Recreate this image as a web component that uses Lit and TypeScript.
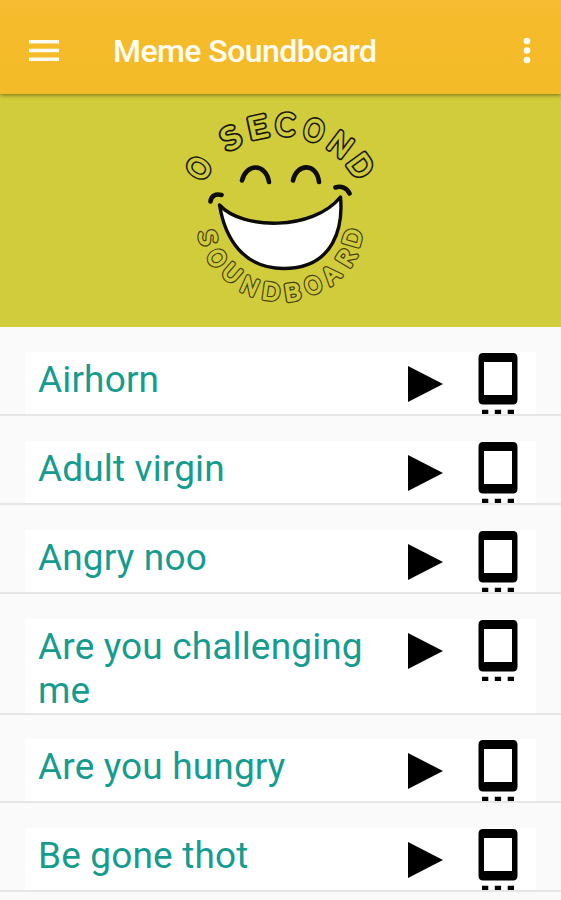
import { LitElement, html, css, svg } from "lit";
import { customElement, property } from "lit/decorators.js";

type Glyph = [letter: string, x: number, y: number, angle: number, stretch: number];

const TOP: Glyph[] = [
  ["O", 198.5, 168, -57, 0.84],
  ["S", 230.5, 137.5, -28, 1.15],
  ["E", 257.5, 127, -12, 1.15],
  ["C", 285, 124.3, 3, 0.95],
  ["O", 314, 130, 17, 0.84],
  ["N", 340.5, 144.5, 37, 0.95],
  ["D", 360.5, 165.5, 54, 0.95],
];

const BOTTOM: Glyph[] = [
  ["S", 208, 237.5, 75, 1.15],
  ["O", 217, 258, 58, 0.9],
  ["U", 232, 273, 41, 1],
  ["N", 250, 286, 24, 0.95],
  ["D", 271, 291.5, 8, 1],
  ["B", 292.5, 292, -9, 1.1],
  ["O", 313, 285, -25.5, 0.9],
  ["A", 331, 274.5, -42, 1],
  ["R", 346, 258, -59, 1.1],
  ["D", 352.5, 238, -74, 1],
];

@customElement("smile-banner")
class SmileBanner extends LitElement {
  static styles = css`
    :host { display: block; height: 232px; background: #d1cc3b; }
    svg { display: block; }
    text { font-family: Lato, "Liberation Sans", sans-serif; font-weight: 300; text-anchor: middle; stroke-linejoin: round; }
    .top { font-size: 29px; }
    .bottom { font-size: 22.5px; }
    .top .outer { stroke: #17160a; fill: #17160a; stroke-width: 5.8; }
    .top .inner { stroke: #d1cc3b; fill: #d1cc3b; stroke-width: 2.5; }
    .bottom .outer { stroke: #453f10; fill: #453f10; stroke-width: 4.8; }
    .bottom .inner { stroke: #d1cc3b; fill: #d1cc3b; stroke-width: 2.4; }
    .line { fill: none; stroke: #0d0c08; stroke-width: 4.6; stroke-linecap: round; }
    .mouth { fill: #fff; stroke: #0b0b08; stroke-width: 3.4; stroke-linejoin: round; }
  `;

  private arc(glyphs: Glyph[], drop: number) {
    return glyphs.map(
      ([c, x, y, a, s]) => svg`<g transform="translate(${x} ${y}) rotate(${a}) scale(${s} 1)">
        <text class="outer" y=${drop}>${c}</text>
        <text class="inner" y=${drop} aria-hidden="true">${c}</text>
      </g>`
    );
  }

  render() {
    return html`<svg width="561" height="232" viewBox="0 95 561 232">
      <g class="top">${this.arc(TOP, 10.4)}</g>
      <g class="bottom">${this.arc(BOTTOM, 8)}</g>
      <path class="line" d="M242 180.500C246 163 266 163 269 182M293 180.500C297 162.500 317 163 319 182" />
      <path class="line" d="M210.500 201.500C211 195.500 216 193.500 221.500 195M335.500 187.500C341 185.500 347 188 349.500 193.500" />
      <path class="mouth" d="M219.500 205C242 230 313 231 340.500 197C343 224 336 268.500 283.500 268.500C243 268.500 225 238 219.500 205Z" />
    </svg>`;
  }
}

@customElement("sound-row")
class SoundRow extends LitElement {
  @property() name = "";

  static styles = css`
    :host { display: flex; box-sizing: border-box; padding: 24.8px 25px 0; border-bottom: 2px solid #e6e6e6; }
    .card { flex: 1; display: grid; grid-template-columns: 383px 70px 1fr; min-height: 0; background: #fff; }
    .name { padding: 6px 0 0 13px; font: 400 37px/44px Roboto, sans-serif; letter-spacing: 0.15px; color: #169c8f; }
    .play { margin-top: 14px; }
    svg { display: block; }
  `;

  render() {
    return html`<div class="card">
      <div class="name">${this.name}</div>
      <svg class="play" width="35" height="36"><path d="M0 0L35 18L0 36Z" /></svg>
      <svg class="phone" width="40" height="62" viewBox="0 0 40 62">
        <path fill-rule="evenodd" d="M5 1H35Q39.500 1 39.500 6V47.500Q39.500 52.500 35 52.500H5Q.5 52.500 .5 47.500V6Q.5 1 5 1ZM6 10V43H34V10Z" />
        <path d="M4 57.700h6.300v4.300H4zM16.800 57.700h6.300v4.300h-6.300zM29.700 57.700H36v4.300h-6.300z" />
      </svg>
    </div>`;
  }
}

@customElement("app-root")
class AppRoot extends LitElement {
  static styles = css`
    :host { display: block; height: 900px; overflow: hidden; background: #fafafa; }
    header {
      position: relative; box-sizing: border-box; height: 94px; padding: 7px 30px 0 29px;
      display: flex; align-items: center;
      background: linear-gradient(#f8bc34, #f5bb2a 24px, #f4bb29);
      box-shadow: 0 1px 4px rgba(70, 60, 0, 0.65);
    }
    h1 { flex: 1; margin: 0 0 0 54px; font: 500 32px/40px Roboto, sans-serif; letter-spacing: -0.55px; color: #fffdf2; white-space: nowrap; }
    header svg { display: block; fill: #fffdf2; }
    smile-banner { border-top: 1px solid #d1cc3b; }
    .list { display: grid; padding-top: 0.4px; grid-template-rows: 88.8px 88.8px 88.8px 120.8px 88.8px 88.8px; }
  `;

  render() {
    const names = ["Airhorn", "Adult virgin", "Angry noo", "Are you challenging me", "Are you hungry", "Be gone thot"];
    return html`
      <header>
        <svg width="30" height="22"><path d="M0 0h30v3.600H0zM0 8.700h30v3.600H0zM0 17.400h30V21H0z" /></svg>
        <h1>Meme Soundboard</h1>
        <svg width="8" height="28"><circle cx="4" cy="4" r="3.300" /><circle cx="4" cy="13.500" r="3.300" /><circle cx="4" cy="23" r="3.300" /></svg>
      </header>
      <smile-banner></smile-banner>
      <div class="list">${names.map((n) => html`<sound-row .name=${n}></sound-row>`)}</div>
    `;
  }
}
